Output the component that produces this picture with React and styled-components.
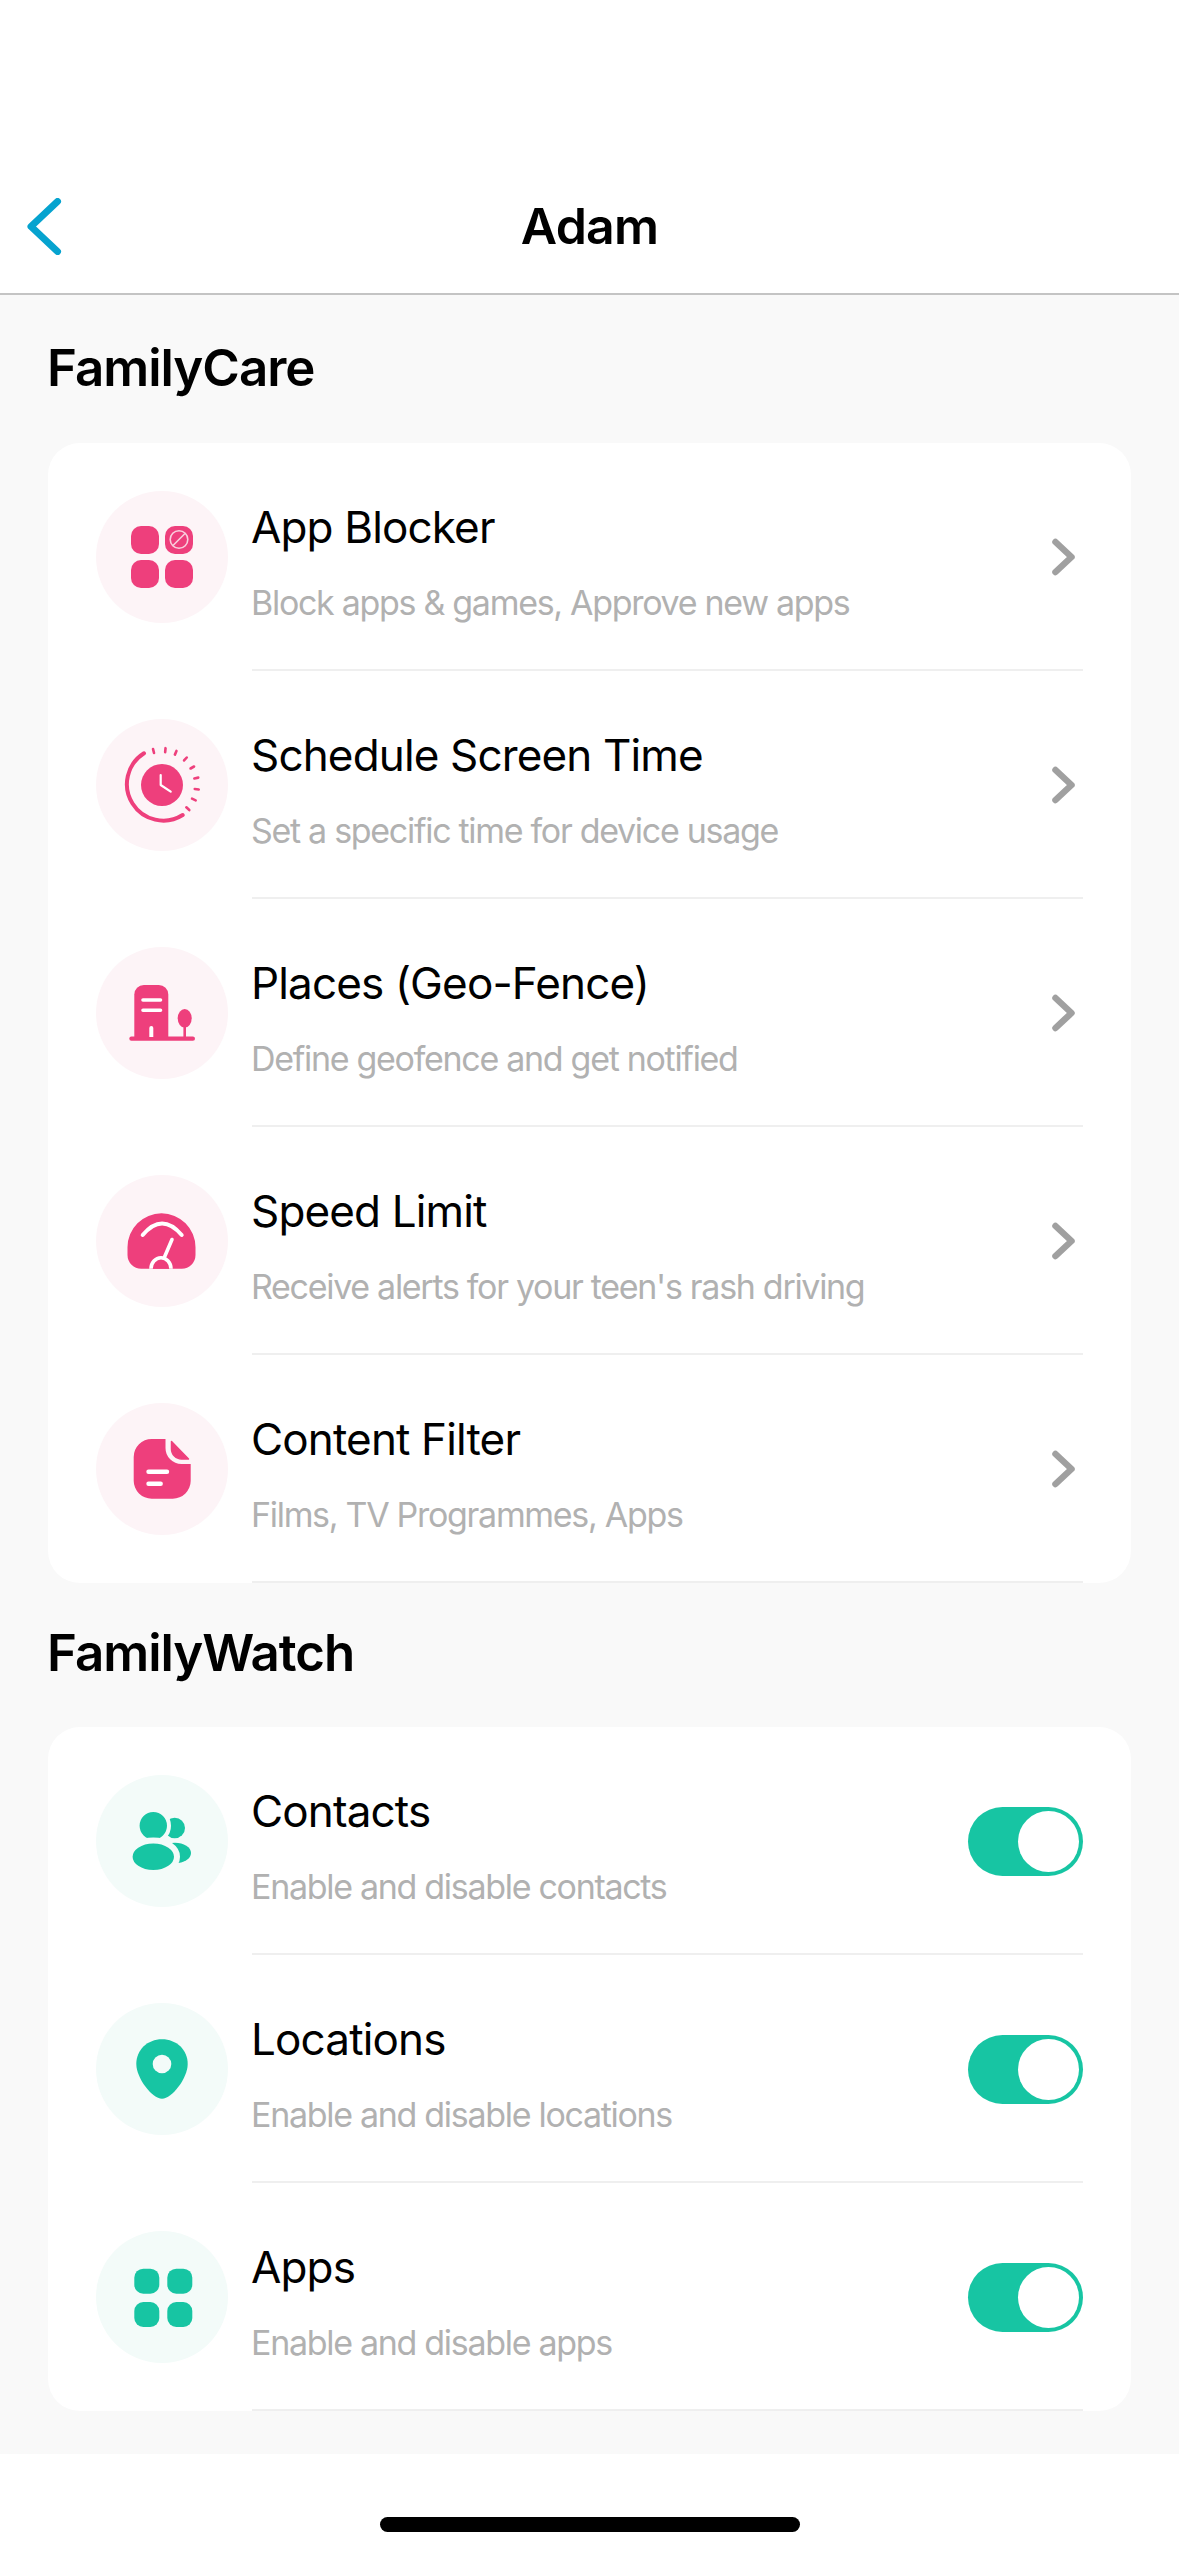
import React from "react";
import styled, { createGlobalStyle } from "styled-components";

const PINK = "#ee3f7c";
const PINK_BG = "#fdf4f7";
const TEAL = "#17c5a3";
const TEAL_BG = "#f3fbf9";

const Global = createGlobalStyle`
  html, body { margin: 0; padding: 0; background: #fff; }
  * { box-sizing: border-box; }
  body { font-family: Inter, "Liberation Sans", sans-serif; -webkit-font-smoothing: antialiased; }
`;

const Page = styled.div`
  width: 1179px;
  height: 2556px;
  display: flex;
  flex-direction: column;
  overflow: hidden;
  background: #fff;
`;

const Header = styled.header`
  height: 295px;
  flex: none;
  padding: 198px 0 0 24px;
  border-bottom: 2px solid #c4c4c4;
  display: grid;
  grid-template-columns: 40px 1fr 40px;
  align-items: start;
`;

const BackButton = styled.svg`
  width: 40px;
  height: 57px;
  display: block;
`;

const Title = styled.h1`
  margin: 0;
  padding-right: 24px;
  text-align: center;
  font-size: 50px;
  line-height: 57px;
  font-weight: 600;
  letter-spacing: -0.8px;
  color: #000;
`;

const Content = styled.main`
  flex: 1;
  background: #f9f9f9;
  padding: 0 48px;
`;

const SectionTitle = styled.h2`
  margin: 0 0 0 -1px;
  height: ${(p) => p.$h}px;
  padding-top: ${(p) => p.$top}px;
  font-size: 51px;
  line-height: 60px;
  font-weight: 600;
  letter-spacing: -1px;
  color: #000;
`;

const Card = styled.section`
  background: #fff;
  border-radius: 32px;
  overflow: hidden;
`;

const Row = styled.div`
  height: 228px;
  display: flex;
  padding: 0 48px;
`;

const IconCircle = styled.div`
  width: 132px;
  height: 132px;
  margin-top: 48px;
  margin-right: 24px;
  flex: none;
  border-radius: 50%;
  background: ${(p) => p.$bg};
  svg { display: block; }
`;

const RowBody = styled.div`
  flex: 1;
  min-width: 0;
  display: flex;
  align-items: flex-start;
  justify-content: space-between;
  border-bottom: 2px solid #efefef;
`;

const RowText = styled.div`
  display: flex;
  flex-direction: column;
  margin-left: -1px;
`;

const RowTitle = styled.div`
  margin-top: 56px;
  font-size: 44px;
  line-height: 56px;
  font-weight: 400;
  letter-spacing: -0.85px;
  color: #000;
`;

const RowSub = styled.div`
  margin-top: 26px;
  font-size: 34px;
  line-height: 44px;
  font-weight: 400;
  letter-spacing: -1.3px;
  color: #b1b1b1;
`;

const Chevron = styled.svg`
  width: 30px;
  height: 42px;
  margin: 93px 5px 0 0;
  flex: none;
`;

const Toggle = styled.div`
  width: 115px;
  height: 69px;
  margin-top: 80px;
  flex: none;
  border-radius: 35px;
  background: ${TEAL};
  display: flex;
  align-items: center;
  justify-content: flex-end;
  padding-right: 4px;
`;

const Knob = styled.div`
  width: 61px;
  height: 61px;
  border-radius: 50%;
  background: #fff;
`;

const Footer = styled.footer`
  height: 102px;
  flex: none;
  background: #fff;
  display: flex;
  justify-content: center;
  padding-top: 63px;
`;

const HomeBar = styled.div`
  width: 420px;
  height: 15px;
  border-radius: 8px;
  background: #000;
`;

const Svg = ({ children }) => (
  <svg width="132" height="132" viewBox="0 0 132 132" aria-hidden="true">{children}</svg>
);

const AppBlockerIcon = () => (
  <Svg>
    <rect x="35" y="35" width="28" height="28" rx="10" fill={PINK} />
    <rect x="69" y="35" width="28" height="28" rx="10" fill={PINK} />
    <rect x="35" y="69" width="28" height="28" rx="10" fill={PINK} />
    <rect x="69" y="69" width="28" height="28" rx="10" fill={PINK} />
    <circle cx="83" cy="48.5" r="8.8" fill="none" stroke="#f9cfdd" strokeWidth="1.6" />
    <path d="M77 54.5 89 42.5" stroke="#f9cfdd" strokeWidth="1.6" />
  </Svg>
);

const tickAngles = [-104, -84.5, -67, -48, -30, -11.5, 7, 24.5, 42.5];

const ClockIcon = () => (
  <Svg>
    <circle cx="66" cy="66" r="21" fill={PINK} />
    <path d="M64.7 56V66L74.7 72.7" fill="none" stroke="#fff" strokeWidth="2.2" strokeLinecap="round" strokeLinejoin="round" />
    <path d="M48 34.3A36.4 36.4 0 1 0 86.7 96" fill="none" stroke={PINK} strokeWidth="4" strokeLinecap="round" />
    {tickAngles.map((a) => {
      const r = (a * Math.PI) / 180;
      return (
        <line
          key={a}
          x1={66 + 33 * Math.cos(r)}
          y1={66 + 33 * Math.sin(r)}
          x2={66 + 37 * Math.cos(r)}
          y2={66 + 37 * Math.sin(r)}
          stroke={PINK}
          strokeWidth="2.6"
          strokeLinecap="round"
        />
      );
    })}
  </Svg>
);

const PlacesIcon = () => (
  <Svg>
    <rect x="33.3" y="89.6" width="65.7" height="4.2" rx="2.1" fill={PINK} />
    <path d="M38.3 91V47.5A9.5 9.5 0 0 1 47.8 38H62.8A9.5 9.5 0 0 1 72.3 47.5V91Z" fill={PINK} />
    <path d="M47 53H64.5M47 63.3H64.5" stroke="#fff" strokeWidth="3.6" strokeLinecap="round" />
    <path d="M53.3 90V81a2 2 0 0 1 4 0V90Z" fill="#fff" />
    <ellipse cx="88.7" cy="71.3" rx="7" ry="9.3" fill={PINK} />
    <path d="M88.7 78V90" stroke={PINK} strokeWidth="2.6" />
  </Svg>
);

const SpeedIcon = () => (
  <Svg>
    <path d="M31.5 72.3a34 34 0 0 1 68 0V80a13.7 13.7 0 0 1-13.7 13.7H45.2A13.7 13.7 0 0 1 31.5 80Z" fill={PINK} />
    <path d="M46.7 60Q66 37 85.7 60" fill="none" stroke="#fff" strokeWidth="4" strokeLinecap="round" />
    <path d="M76 64.5 68.5 82" fill="none" stroke="#fff" strokeWidth="3.6" strokeLinecap="round" />
    <path d="M55 93.7A10 11 0 0 1 75 93.7" fill={PINK} stroke="#fff" strokeWidth="3.6" />
  </Svg>
);

const ContentIcon = () => (
  <Svg>
    <path d="M55.7 36H69.5V45A16 16 0 0 0 85.5 61H94.7V77.7A18 18 0 0 1 76.7 95.7H55.7A18 18 0 0 1 37.7 77.7V54A18 18 0 0 1 55.7 36Z" fill={PINK} />
    <path d="M75.5 38.5 92.5 56H85.5A10 10 0 0 1 75.5 46Z" fill={PINK} stroke={PINK} strokeWidth="1.5" strokeLinejoin="round" />
    <path d="M52.5 68.7H71M52.5 80.7H64.7" stroke="#fff" strokeWidth="4.4" strokeLinecap="round" />
  </Svg>
);

const ContactsIcon = () => (
  <Svg>
    <circle cx="78.7" cy="53" r="10.3" fill={TEAL} />
    <ellipse cx="79" cy="78" rx="16" ry="10.3" fill={TEAL} />
    <circle cx="57.3" cy="50.7" r="15.7" fill={TEAL} stroke={TEAL_BG} strokeWidth="4" />
    <ellipse cx="57.3" cy="81.7" rx="23.7" ry="16.3" fill={TEAL} stroke={TEAL_BG} strokeWidth="6" />
  </Svg>
);

const LocationIcon = () => (
  <Svg>
    <path d="M66 36.3C80.5 36.3 91.7 47 91.7 61 91.7 75 76 95.7 66 95.7 56 95.7 40.3 75 40.3 61 40.3 47 51.5 36.3 66 36.3Z" fill={TEAL} />
    <circle cx="66" cy="61" r="9.3" fill={TEAL_BG} />
  </Svg>
);

const AppsIcon = () => (
  <Svg>
    <rect x="38.3" y="37.7" width="25" height="25" rx="9" fill={TEAL} />
    <rect x="71.3" y="37.7" width="25" height="25" rx="9" fill={TEAL} />
    <rect x="38.3" y="71" width="25" height="25" rx="9" fill={TEAL} />
    <rect x="71.3" y="71" width="25" height="25" rx="9" fill={TEAL} />
  </Svg>
);

const careItems = [
  { title: "App Blocker", sub: "Block apps & games, Approve new apps", Icon: AppBlockerIcon },
  { title: "Schedule Screen Time", sub: "Set a specific time for device usage", Icon: ClockIcon },
  { title: "Places (Geo-Fence)", sub: "Define geofence and get notified", Icon: PlacesIcon },
  { title: "Speed Limit", sub: "Receive alerts for your teen's rash driving", Icon: SpeedIcon },
  { title: "Content Filter", sub: "Films, TV Programmes, Apps", Icon: ContentIcon },
];

const watchItems = [
  { title: "Contacts", sub: "Enable and disable contacts", Icon: ContactsIcon },
  { title: "Locations", sub: "Enable and disable locations", Icon: LocationIcon },
  { title: "Apps", sub: "Enable and disable apps", Icon: AppsIcon },
];

const ListRow = ({ item, bg, trailing }) => (
  <Row>
    <IconCircle $bg={bg}>
      <item.Icon />
    </IconCircle>
    <RowBody>
      <RowText>
        <RowTitle>{item.title}</RowTitle>
        <RowSub>{item.sub}</RowSub>
      </RowText>
      {trailing}
    </RowBody>
  </Row>
);

const RowChevron = () => (
  <Chevron viewBox="0 0 30 42">
    <path d="M7.5 6 23.5 21 7.5 36" fill="none" stroke="#a0a0a0" strokeWidth="6.5" strokeLinecap="round" strokeLinejoin="round" />
  </Chevron>
);

const RowToggle = () => (
  <Toggle>
    <Knob />
  </Toggle>
);

export default function App() {
  return (
    <Page>
      <Global />
      <Header>
        <BackButton viewBox="0 0 40 57">
          <path d="M33.5 3.5 7 28.5 33.5 53.5" fill="none" stroke="#06a3cf" strokeWidth="7" strokeLinecap="round" strokeLinejoin="round" />
        </BackButton>
        <Title>Adam</Title>
      </Header>
      <Content>
        <SectionTitle $h={148} $top={43}>FamilyCare</SectionTitle>
        <Card>
          {careItems.map((item) => (
            <ListRow key={item.title} item={item} bg={PINK_BG} trailing={<RowChevron />} />
          ))}
        </Card>
        <SectionTitle $h={144} $top={40}>FamilyWatch</SectionTitle>
        <Card>
          {watchItems.map((item) => (
            <ListRow key={item.title} item={item} bg={TEAL_BG} trailing={<RowToggle />} />
          ))}
        </Card>
      </Content>
      <Footer>
        <HomeBar />
      </Footer>
    </Page>
  );
}
